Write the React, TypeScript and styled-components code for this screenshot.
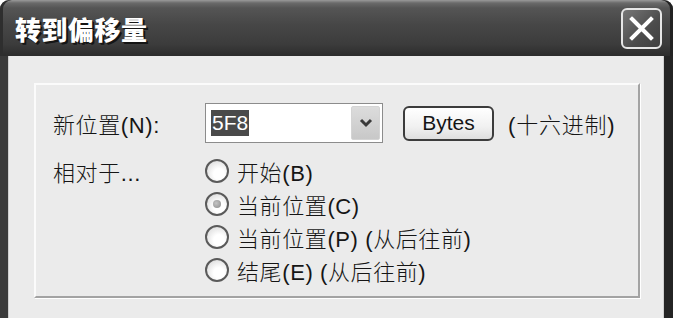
import React from "react";
import styled, { createGlobalStyle } from "styled-components";

const Global = createGlobalStyle`
  html, body { margin: 0; padding: 0; background: #ffffff; }
  body { font-family: "Liberation Sans", "Noto Sans CJK SC", sans-serif; }
`;

const Window = styled.div`
  width: 673px;
  height: 318px;
  display: flex;
  flex-direction: column;
  overflow: hidden;
`;

const TitleBar = styled.div`
  height: 56px;
  flex: none;
  display: flex;
  align-items: center;
  justify-content: space-between;
  padding: 0 11px 0 15px;
  box-sizing: border-box;
  border-radius: 9px 9px 0 0;
  background: linear-gradient(
    #9a9a9a 0px,
    #6a6a6a 3px,
    #555555 8px,
    #474747 24px,
    #3c3c3c 44px,
    #2c2c2c 56px
  );
  box-shadow: inset 3px 0 0 #2e2e2e, inset -3px 0 0 #222222;
`;

const Title = styled.div`
  font-family: "Noto Sans CJK SC", sans-serif;
  font-weight: 900;
  font-size: 26px;
  letter-spacing: 0.5px;
  color: #ffffff;
  text-shadow: 2px 2px 0 #151515, 1px 1px 0 #202020;
  line-height: 1;
  margin-top: 1px;
`;

const CloseButton = styled.div`
  width: 41px;
  height: 41px;
  box-sizing: border-box;
  border: 2px solid #e6e6e6;
  border-radius: 6px;
  background: linear-gradient(135deg, #777777, #4c4c4c 60%, #3f3f3f);
  display: flex;
  align-items: center;
  justify-content: center;
`;

const Body = styled.div`
  flex: 1;
  background: #ebebeb;
  border-left: 8px solid #3a3a3a;
  border-right: 9px solid #242424;
  box-shadow: inset 1px 0 0 #cfcfcf, inset -1px 0 0 #d0d0d0;
  padding: 27px 0 0 26px;
  box-sizing: border-box;
`;

const Group = styled.div`
  width: 606px;
  height: 215px;
  box-sizing: border-box;
  border: 2px solid;
  border-color: #fbfbfb #a3a3a3 #a3a3a3 #fbfbfb;
  box-shadow: 1px 1px 0 #ffffff;
  padding: 18px 0 0 17px;
  display: grid;
  grid-template-columns: 152px 1fr;
  grid-template-rows: 40px auto;
  row-gap: 11px;
  align-items: start;
`;

const Label = styled.div<{ $h: number }>`
  height: ${(p) => p.$h}px;
  display: flex;
  align-items: center;
  font-size: 22px;
  font-weight: 300;
  letter-spacing: 0.6px;
  color: #151515;
  white-space: nowrap;
`;

const Controls = styled.div`
  display: flex;
  align-items: center;
  height: 40px;
`;

const Combo = styled.div`
  width: 178px;
  height: 40px;
  box-sizing: border-box;
  border: 1px solid #8c8c8c;
  background: #ffffff;
  display: flex;
  align-items: center;
  padding: 2px 2px 2px 5px;
`;

const Selection = styled.span`
  background: #4a4a4a;
  color: #ffffff;
  font-size: 21px;
  line-height: 26px;
  height: 26px;
  padding: 0 1px;
`;

const DropButton = styled.div`
  margin-left: auto;
  width: 29px;
  height: 34px;
  box-sizing: border-box;
  border: 1px solid #d4d4d4;
  border-radius: 2px;
  background: linear-gradient(#dcdcdc, #c8c8c8);
  display: flex;
  align-items: center;
  justify-content: center;
`;

const PushButton = styled.div`
  margin-left: 20px;
  width: 91px;
  height: 35px;
  box-sizing: border-box;
  border: 2px solid #3c3c3c;
  border-radius: 6px;
  background: linear-gradient(#ffffff, #f1f1f1 60%, #dedede);
  display: flex;
  align-items: center;
  justify-content: center;
  font-size: 21px;
  color: #151515;
`;

const Hint = styled.div`
  margin-left: 14px;
  font-size: 22px;
  font-weight: 300;
  letter-spacing: 0.8px;
  color: #151515;
  white-space: nowrap;
`;

const RadioList = styled.div`
  display: flex;
  flex-direction: column;
`;

const RadioRow = styled.div`
  height: 33px;
  display: flex;
  align-items: center;
  gap: 8px;
  font-size: 22px;
  font-weight: 300;
  letter-spacing: 0.6px;
  color: #151515;
  white-space: nowrap;
`;

const RadioCircle = styled.span<{ $checked?: boolean }>`
  width: 24px;
  height: 24px;
  box-sizing: border-box;
  border-radius: 50%;
  border: 2px solid #5a5a5a;
  background: radial-gradient(circle at 60% 65%, #ffffff 30%, #e2e2e2 75%, #c9c9c9 100%);
  display: flex;
  align-items: center;
  justify-content: center;
  flex: none;
  &::after {
    content: "";
    display: ${(p) => (p.$checked ? "block" : "none")};
    width: 8px;
    height: 8px;
    border-radius: 50%;
    background: radial-gradient(circle at 40% 40%, #c4c4c4, #8a8a8a);
  }
`;

const radios = [
  { label: "开始(B)", checked: false },
  { label: "当前位置(C)", checked: true },
  { label: "当前位置(P) (从后往前)", checked: false },
  { label: "结尾(E) (从后往前)", checked: false },
];

export default function App() {
  return (
    <>
      <Global />
      <Window>
        <TitleBar>
          <Title>转到偏移量</Title>
          <CloseButton>
            <svg width="25" height="25" viewBox="0 0 25 25">
              <path d="M3 3 L22 22 M22 3 L3 22" stroke="#ffffff" strokeWidth="4" strokeLinecap="square" />
            </svg>
          </CloseButton>
        </TitleBar>
        <Body>
          <Group>
            <Label $h={40}>新位置(N):</Label>
            <Controls>
              <Combo>
                <Selection>5F8</Selection>
                <DropButton>
                  <svg width="14" height="10" viewBox="0 0 14 10">
                    <path d="M2 2 L7 7 L12 2" stroke="#3a3a3a" strokeWidth="3" fill="none" />
                  </svg>
                </DropButton>
              </Combo>
              <PushButton>Bytes</PushButton>
              <Hint>(十六进制)</Hint>
            </Controls>
            <Label $h={33}>相对于...</Label>
            <RadioList>
              {radios.map((r) => (
                <RadioRow key={r.label}>
                  <RadioCircle $checked={r.checked} />
                  {r.label}
                </RadioRow>
              ))}
            </RadioList>
          </Group>
        </Body>
      </Window>
    </>
  );
}
